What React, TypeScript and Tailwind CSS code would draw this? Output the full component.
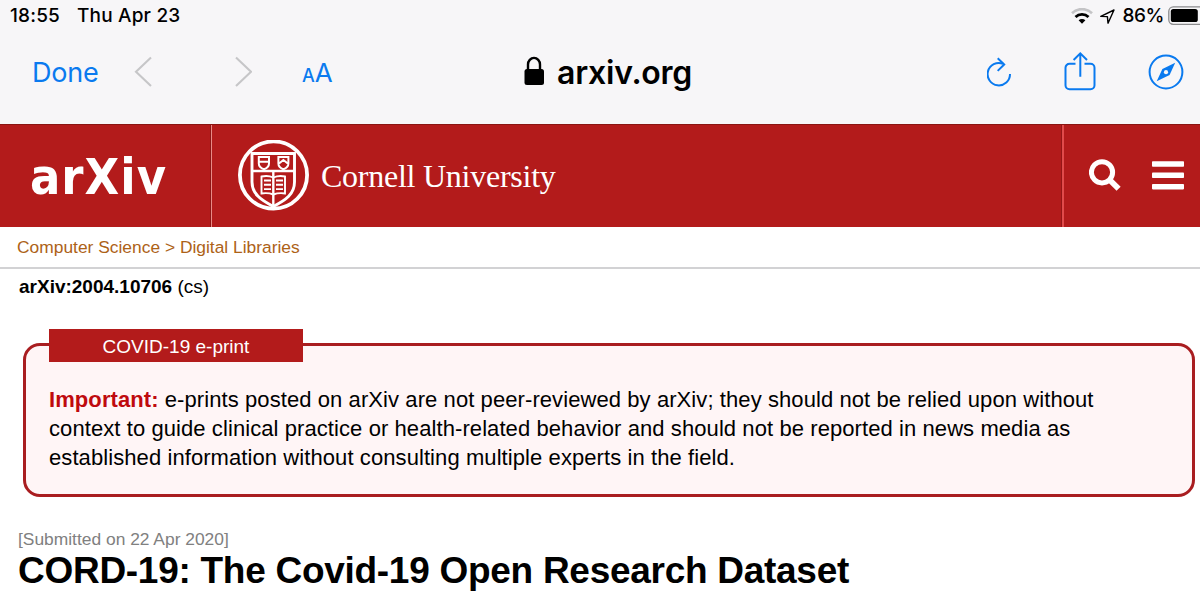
import React from "react";

function StatusBar() {
  return (
    <div className="flex h-8 items-center justify-between overflow-hidden pl-[10px] font-['Inter',sans-serif] text-[19px] leading-8 font-medium text-black">
      <div className="flex gap-[17px] tracking-[0.18px] whitespace-pre">
        <span>18:55</span>
        <span>Thu Apr 23</span>
      </div>
      <div className="flex shrink-0 items-center">
        <svg width="22" height="16" viewBox="0 0 22 16" className="mr-[7px]">
          <path d="M1 5.2A14.4 14.4 0 0 1 21 5.2" fill="none" stroke="#c4c4c6" strokeWidth="2.7" />
          <path d="M4.5 8.9A9.4 9.4 0 0 1 17.5 8.9" fill="none" stroke="#000" strokeWidth="2.8" />
          <path d="M11 15.8L7.6 12.3A4.9 4.9 0 0 1 14.4 12.3Z" fill="#000" />
        </svg>
        <svg width="15" height="15" viewBox="0 0 15 15" className="mr-[7px]">
          <path d="M.8 7.4L14 1L8 14.2L7.4 7.6Z" fill="none" stroke="#000" strokeWidth="1.4" strokeLinejoin="round" />
        </svg>
        <span className="tracking-[-0.4px]">86%</span>
        <svg width="32" height="20" viewBox="0 0 32 20" className="ml-[4px]">
          <rect x=".8" y=".8" width="40" height="17.5" rx="4.5" fill="none" stroke="#8b8b8d" strokeWidth="1.3" />
          <rect x="2.8" y="2.9" width="27" height="13.2" rx="2.6" fill="#000" />
        </svg>
      </div>
    </div>
  );
}

function Toolbar() {
  return (
    <div className="flex h-[92px] items-start pt-[20px] font-['Inter',sans-serif] text-[#0a7aef]">
      <div className="ml-[32px] w-[102px] pt-px text-[27px] leading-[40px] tracking-[-0.2px]">Done</div>
      <svg width="18" height="40" viewBox="0 0 18 40" className="mr-[82px]">
        <path d="M17 5.6L2 19.8L17 34" fill="none" stroke="#c6c6c8" strokeWidth="2.1" />
      </svg>
      <svg width="18" height="40" viewBox="0 0 18 40">
        <path d="M2 5.6L17 19.8L2 34" fill="none" stroke="#c6c6c8" strokeWidth="2.1" />
      </svg>
      <div className="ml-[50px] w-[222px] pt-px leading-[40px] whitespace-nowrap">
        <span className="text-[18px] font-medium">A</span>
        <span className="text-[26px]">A</span>
      </div>
      <svg width="20" height="40" viewBox="0 0 20 40" className="text-black">
        <rect x=".5" y="17" width="19.5" height="16" rx="2.5" fill="currentColor" />
        <path d="M4 18V12.5a6 6.6 0 0 1 12 0V18" fill="none" stroke="currentColor" strokeWidth="2.4" />
      </svg>
      <div className="ml-[13px] w-[430px] pt-px text-[32px] leading-[40px] font-semibold tracking-[-0.25px] text-black">
        arxiv.org
      </div>
      <svg width="26" height="40" viewBox="0 0 26 40" className="mr-[51px]" fill="none" stroke="currentColor" strokeWidth="2">
        <path d="M23 22A11.2 11.2 0 1 1 16 11.8" />
        <path d="M10.7 6.2L17.2 12.5L10.7 18.9" />
      </svg>
      <svg width="32" height="40" viewBox="0 0 32 40" className="mr-[52px]" fill="none" stroke="currentColor" strokeWidth="2">
        <path d="M11.5 11.8H5.5a4 4 0 0 0-4 4V33.3a4 4 0 0 0 4 4H26.5a4 4 0 0 0 4-4V15.8a4 4 0 0 0-4-4H20.5" />
        <path d="M16.3 24.8V2M9.6 8L16.3 1.4L23 8" />
      </svg>
      <svg width="36" height="40" viewBox="0 0 36 40">
        <circle cx="18" cy="20" r="16.4" fill="none" stroke="currentColor" strokeWidth="2" />
        <path d="M27.2 10.8L21.6 23L8.7 29.3L14.4 17.1Z" fill="currentColor" />
        <circle cx="18" cy="20.2" r="2.1" fill="#f7f6f8" />
      </svg>
    </div>
  );
}

function CornellSeal() {
  return (
    <svg width="72" height="72" viewBox="0 0 72 72" fill="none" stroke="#fff">
      <circle cx="35.5" cy="35" r="33.6" strokeWidth="3.8" />
      <path d="M14 13.5H56.5V42C56.5 54 48 60 35.3 66.5C23 60 14 54 14 42Z" strokeWidth="2.9" />
      <path d="M14 31H56" strokeWidth="2.4" />
      <path d="M35.3 31V65" strokeWidth="2.4" />
      <path d="M20.8 17H31V23.5Q31 27.5 26 29.2Q20.8 27.5 20.8 23.5ZM21 21.8H31" strokeWidth="2" />
      <path d="M40.4 17H50.4V23.5Q50.4 27.5 45.4 29.2Q40.4 27.5 40.4 23.5ZM40.4 24L45.4 20L50.4 24" strokeWidth="2" />
      <path d="M23.5 36.5Q30 35 35.3 37.5Q41 35 47 36.5V53.5Q41 52.5 35.3 54.5Q30 52.5 23.5 53.5Z" strokeWidth="1.9" />
      <path d="M26 40.5H33M26 44.8H33M26 49.1H33M38 40.5H45M38 44.8H45M38 49.1H45" strokeWidth="1.9" />
    </svg>
  );
}

function Banner() {
  return (
    <header className="flex h-[103px] border-t border-[#8a1512] bg-[#b31b1b] text-white">
      <div className="flex w-[211px] items-center border-r border-[#8f1414] pt-[2px] pl-[30px]">
        <span className="font-['DejaVu_Sans_Condensed','DejaVu_Sans',sans-serif] text-[50px] leading-none font-bold tracking-[1px] [font-stretch:condensed]">
          arXiv
        </span>
      </div>
      <div className="flex flex-1 items-center border-r border-l border-r-[#951616] border-l-[#e98a86] pl-[26px]">
        <CornellSeal />
        <span className="ml-[11px] font-['Liberation_Serif',serif] text-[32px] leading-none tracking-[-0.25px] whitespace-nowrap">
          Cornell University
        </span>
      </div>
      <div className="flex w-[138px] items-center border-l-2 border-[#e04b4b] pl-[25px]">
        <svg width="34" height="34" viewBox="0 0 34 34" fill="none" stroke="#fff">
          <circle cx="13" cy="13.3" r="10.6" strokeWidth="5" />
          <path d="M21 21.3L29.6 29.7" strokeWidth="5.8" />
        </svg>
        <svg width="32" height="30" viewBox="0 0 32 30" className="ml-[29px]" fill="#fff">
          <rect y=".3" width="32" height="5.4" rx=".8" />
          <rect y="11.6" width="32" height="5.4" rx=".8" />
          <rect y="23" width="32" height="5.4" rx=".8" />
        </svg>
      </div>
    </header>
  );
}

export default function App() {
  return (
    <div className="flex h-[596px] w-[1200px] flex-col overflow-hidden bg-white font-['Liberation_Sans',sans-serif] text-black">
      <div className="h-[124px] shrink-0 bg-[#f7f6f8]">
        <StatusBar />
        <Toolbar />
      </div>
      <Banner />
      <nav className="h-[42px] shrink-0 border-b-2 border-[#d2d2d4] pl-[17px] text-[17.4px] leading-[41px] whitespace-nowrap text-[#ad6217]">
        Computer Science &gt; Digital Libraries
      </nav>
      <div className="h-[35px] shrink-0 pl-[19px] text-[19px] leading-[35px] whitespace-nowrap">
        <b>arXiv:2004.10706</b> (cs)
      </div>
      <section className="relative mt-[39px] ml-[23px] h-[154px] w-[1172px] shrink-0 rounded-[17px] border-[3px] border-[#a91d20] bg-[#fff5f6] pt-[39px] pl-[23px]">
        <div className="absolute top-[-17px] left-[23px] h-[33px] w-[254px] bg-[#b31b1b] text-center text-[19px] leading-[36px] text-white">
          COVID-19 e-print
        </div>
        <p className="text-[22px] leading-[29px] tracking-[0.083px] whitespace-nowrap">
          <b className="text-[#bf0a0e]">Important:</b> e-prints posted on arXiv are not peer-reviewed by arXiv; they should not be relied upon without
          <br />
          context to guide clinical practice or health-related behavior and should not be reported in news media as
          <br />
          established information without consulting multiple experts in the field.
        </p>
      </section>
      <div className="mt-[32px] h-[20px] shrink-0 pl-[18px] text-[17.4px] leading-[20px] whitespace-nowrap text-[#808080]">
        [Submitted on 22 Apr 2020]
      </div>
      <h1 className="pl-[18px] text-[37px] leading-[43px] font-bold tracking-[-0.28px] whitespace-nowrap">
        CORD-19: The Covid-19 Open Research Dataset
      </h1>
    </div>
  );
}
